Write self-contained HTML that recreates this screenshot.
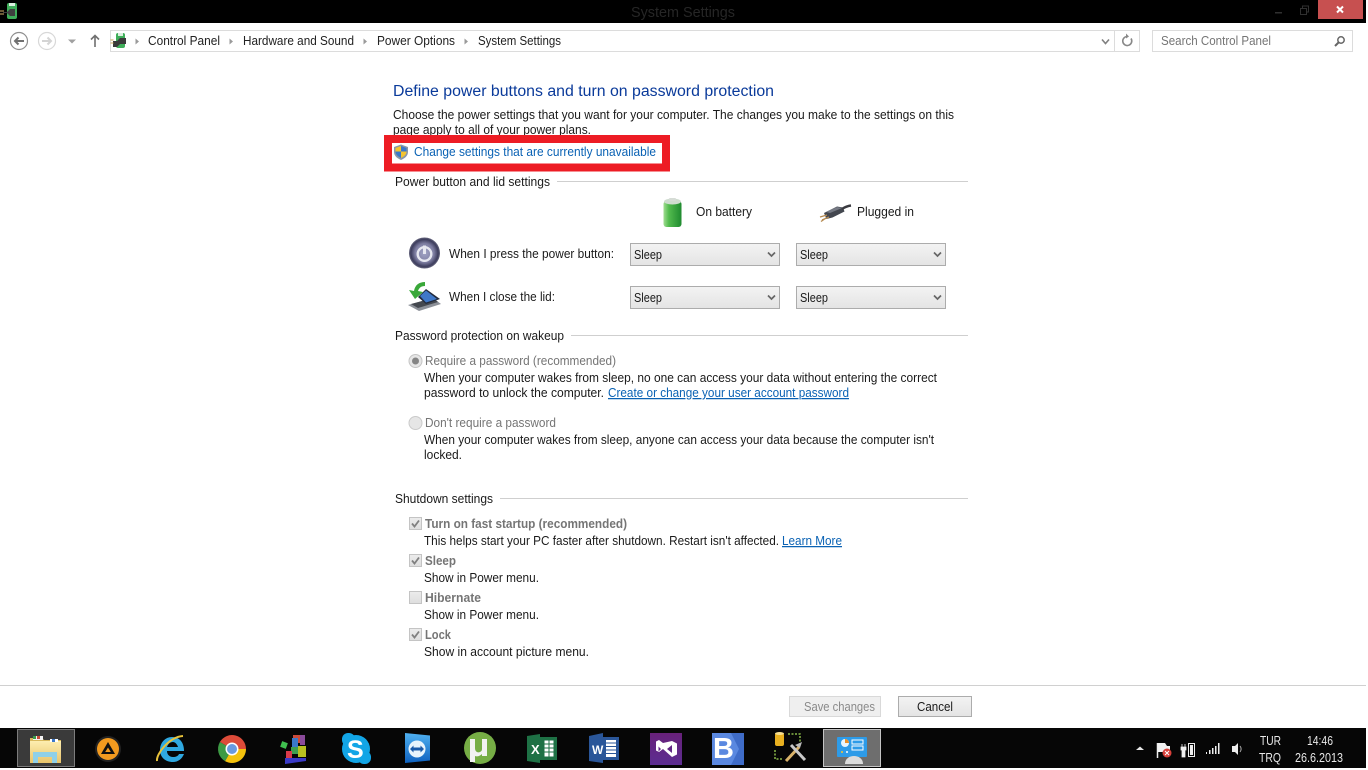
<!DOCTYPE html>
<html><head><meta charset="utf-8"><title>System Settings</title>
<style>
html,body{margin:0;padding:0;background:#fff;width:1368px;height:770px;overflow:hidden}
svg{display:block}
text{font-family:"Liberation Sans",sans-serif;font-size:12.5px;fill:#1a1a1a}
.g{fill:#757575}
.b{font-weight:bold;fill:#757575}
.l{fill:#0a62b4}
.u{fill:#0a62b4;text-decoration:underline}
.s{fill:#222}
.t{fill:#e8e8e8;font-size:13px}
</style></head><body>
<svg width="1368" height="770" viewBox="0 0 1368 770" xmlns="http://www.w3.org/2000/svg">
<defs>
<linearGradient id="sel" x1="0" y1="0" x2="0" y2="1"><stop offset="0" stop-color="#f3f3f3"/><stop offset="1" stop-color="#e4e4e4"/></linearGradient>
<linearGradient id="bat" x1="0" y1="0" x2="1" y2="0"><stop offset="0" stop-color="#a0dc90"/><stop offset=".3" stop-color="#52bb4e"/><stop offset="1" stop-color="#1f8a2f"/></linearGradient>
<radialGradient id="pw" cx=".5" cy=".5" r=".55"><stop offset="0" stop-color="#a2a4c6"/><stop offset=".55" stop-color="#7e7ea2"/><stop offset=".8" stop-color="#3c3c5c"/><stop offset="1" stop-color="#8a8a9a"/></radialGradient>
<linearGradient id="fold" x1="0" y1="0" x2="0" y2="1"><stop offset="0" stop-color="#fdeeb0"/><stop offset="1" stop-color="#e9c46a"/></linearGradient>
<linearGradient id="chk" x1="0" y1="0" x2="0" y2="1"><stop offset="0" stop-color="#ececec"/><stop offset="1" stop-color="#dedede"/></linearGradient>
<linearGradient id="vs" x1="0" y1="0" x2="0" y2="1"><stop offset="0" stop-color="#68217a"/><stop offset="1" stop-color="#5c2d91"/></linearGradient>
<linearGradient id="tv" x1="0" y1="0" x2="0" y2="1"><stop offset="0" stop-color="#4fb0f0"/><stop offset="1" stop-color="#0f62c0"/></linearGradient>
</defs>

<!-- title bar -->
<rect x="0" y="0" width="1366" height="23" fill="#000"/>
<rect x="7" y="3" width="10" height="16" rx="2" fill="#3fae5a"/><rect x="9" y="3" width="6" height="3" fill="#dcefe0"/>
<path d="M3 12h4l3-3h5v7h-5l-3-3H3z" fill="#3f3f3f"/><path d="M0 11h4M0 14h4" stroke="#d9b26a"/>
<text x="631" y="17" textLength="104" lengthAdjust="spacingAndGlyphs" style="font-size:15px;fill:#262626">System Settings</text>
<rect x="1275" y="12" width="7" height="1.500" fill="#303030"/>
<path d="M1300.500 8.500h6v6h-6zM1302.500 8.500v-2.500h6v6h-2" fill="none" stroke="#303030"/>
<rect x="1318" y="0" width="45" height="19" fill="#c75050"/>
<path d="M1337 6.500l6 6M1343 6.500l-6 6" stroke="#fff" stroke-width="2"/>

<!-- nav -->
<circle cx="19" cy="41" r="8.500" fill="#fff" stroke="#8f8f8f" stroke-width="1.200"/>
<path d="M24 41h-9M18.500 37.500L15 41l3.500 3.500" fill="none" stroke="#707070" stroke-width="2"/>
<circle cx="47" cy="41" r="8.500" fill="#fff" stroke="#d8d8d8" stroke-width="1.200"/>
<path d="M42 41h9M47.500 37.500L51 41l-3.500 3.500" fill="none" stroke="#d4d4d4" stroke-width="2"/>
<path d="M68 39.500h8l-4 4z" fill="#a0a0a0"/>
<path d="M95 47V36M91 39.500l4-4 4 4" fill="none" stroke="#707070" stroke-width="1.600"/>
<rect x="110.500" y="30.500" width="1029" height="21" fill="#fff" stroke="#dcdcdc"/>
<line x1="1114.500" y1="31" x2="1114.500" y2="51" stroke="#dcdcdc"/>
<path d="M1102 39.500l3.500 4 3.500-4" fill="none" stroke="#808080" stroke-width="1.600"/>
<path d="M1131 38.500a4.500 4.500 0 1 1-3.500-2" fill="none" stroke="#888" stroke-width="1.600"/><path d="M1126 33.500l3 3-3 2z" fill="#888"/>
<rect x="116" y="33" width="9" height="15" rx="2" fill="#3fae5a"/><rect x="118" y="33" width="5" height="3" fill="#dcefe0"/>
<path d="M113 41h4l3-3h6v6h-6l-3 3h-4z" fill="#3a3a3a"/><path d="M110.500 40h3M110.500 43h3" stroke="#c8a050"/>
<path d="M135.500 38.500l3.500 3-3.500 3z" fill="#9a9a9a"/>
<path d="M229.500 38.500l3.500 3-3.500 3z" fill="#9a9a9a"/>
<path d="M363.500 38.500l3.500 3-3.500 3z" fill="#9a9a9a"/>
<path d="M464.500 38.500l3.500 3-3.500 3z" fill="#9a9a9a"/>
<text x="148" y="45" textLength="72" lengthAdjust="spacingAndGlyphs" class="s">Control Panel</text>
<text x="243" y="45" textLength="111" lengthAdjust="spacingAndGlyphs" class="s">Hardware and Sound</text>
<text x="377" y="45" textLength="78" lengthAdjust="spacingAndGlyphs" class="s">Power Options</text>
<text x="478" y="45" textLength="83" lengthAdjust="spacingAndGlyphs" class="s">System Settings</text>
<rect x="1152.500" y="30.500" width="200" height="21" fill="#fff" stroke="#dcdcdc"/>
<text x="1161" y="45" textLength="110" lengthAdjust="spacingAndGlyphs" class="g">Search Control Panel</text>
<circle cx="1341" cy="40" r="3.200" fill="none" stroke="#666" stroke-width="1.500"/><path d="M1338.500 42.500l-3.500 3.500" stroke="#666" stroke-width="2"/>

<!-- heading -->
<text x="393" y="96" textLength="381" lengthAdjust="spacingAndGlyphs" style="font-size:15.500px;fill:#0a3a9a">Define power buttons and turn on password protection</text>
<text x="393" y="119" textLength="561" lengthAdjust="spacingAndGlyphs">Choose the power settings that you want for your computer. The changes you make to the settings on this</text>
<text x="393" y="134" textLength="198" lengthAdjust="spacingAndGlyphs">page apply to all of your power plans.</text>

<!-- red box -->
<rect x="388" y="139" width="278" height="28.500" fill="none" stroke="#ed1c24" stroke-width="8"/>
<path d="M401 144.500l7 2.500v5c0 4-3.500 6.500-7 8-3.500-1.500-7-4-7-8v-5z" fill="#8a96a8"/>
<path d="M401 146l5.500 2v3.500H401z" fill="#3b78c9"/><path d="M401 146l-5.500 2v3.500H401z" fill="#f4c430"/>
<path d="M401 151.500h5.500c0 3-2.500 5-5.500 6.500z" fill="#f4c430"/><path d="M401 151.500h-5.500c0 3 2.500 5 5.500 6.500z" fill="#3b78c9"/>
<text x="414" y="156" textLength="242" lengthAdjust="spacingAndGlyphs" class="l">Change settings that are currently unavailable</text>

<!-- power section -->
<text x="395" y="186" textLength="155" lengthAdjust="spacingAndGlyphs">Power button and lid settings</text>
<line x1="557" y1="181.500" x2="968" y2="181.500" stroke="#cfcfcf"/>

<rect x="663.500" y="201" width="18" height="26" rx="3" fill="url(#bat)"/>
<ellipse cx="672.500" cy="201.500" rx="8.500" ry="3" fill="#cfdccf"/><rect x="669" y="198" width="7" height="3" rx="1" fill="#d6dcd6"/>
<text x="696" y="216" textLength="56" lengthAdjust="spacingAndGlyphs">On battery</text>

<path d="M824 213l13-6.500 6 1 1.500 4-12 6-6 1.500z" fill="#43474f"/>
<path d="M826 212l11-5 5 1-12 5z" fill="#767a84"/>
<path d="M842 209c3-2 5-3 9-3.500" fill="none" stroke="#3a3a40" stroke-width="2.500"/>
<path d="M827 215l-7 2M829 217l-7 3M826 218l-5 3.500" stroke="#b58a50" stroke-width="1.300"/>
<text x="857" y="216" textLength="57" lengthAdjust="spacingAndGlyphs">Plugged in</text>

<circle cx="424.500" cy="253" r="15.500" fill="url(#pw)"/>
<circle cx="424.500" cy="254" r="6.800" fill="none" stroke="#e6e7f0" stroke-width="2.400"/>
<line x1="424.500" y1="245.500" x2="424.500" y2="254" stroke="#e6e7f0" stroke-width="3"/>
<text x="449" y="258" textLength="165" lengthAdjust="spacingAndGlyphs">When I press the power button:</text>

<path d="M408 305l25-7 8 6-22 7z" fill="#8c9098"/><path d="M411 304l22-6 5 4-20 6z" fill="#44484f"/>
<path d="M418 297l8-8 14 10-14 5z" fill="#222a3c"/><path d="M420 296l6-5.500 11 8.500-11 3.500z" fill="#3f78c8"/>
<path d="M425 282c-6 0-10 3-11 9l-5-1 6 9 8-7-5-1c1-3 3-5 7-5z" fill="#3aa83a"/>
<text x="449" y="301" textLength="106" lengthAdjust="spacingAndGlyphs">When I close the lid:</text>

<rect x="630.500" y="243.500" width="149" height="22" fill="url(#sel)" stroke="#acacac"/>
<text x="634" y="259" textLength="28" lengthAdjust="spacingAndGlyphs">Sleep</text>
<path d="M768 252.500l3.500 3.500 3.500-3.500" fill="none" stroke="#666" stroke-width="1.700"/>
<rect x="796.500" y="243.500" width="149" height="22" fill="url(#sel)" stroke="#acacac"/>
<text x="800" y="259" textLength="28" lengthAdjust="spacingAndGlyphs">Sleep</text>
<path d="M934 252.500l3.500 3.500 3.500-3.500" fill="none" stroke="#666" stroke-width="1.700"/>
<rect x="630.500" y="286.500" width="149" height="22" fill="url(#sel)" stroke="#acacac"/>
<text x="634" y="302" textLength="28" lengthAdjust="spacingAndGlyphs">Sleep</text>
<path d="M768 295.500l3.500 3.500 3.500-3.500" fill="none" stroke="#666" stroke-width="1.700"/>
<rect x="796.500" y="286.500" width="149" height="22" fill="url(#sel)" stroke="#acacac"/>
<text x="800" y="302" textLength="28" lengthAdjust="spacingAndGlyphs">Sleep</text>
<path d="M934 295.500l3.500 3.500 3.500-3.500" fill="none" stroke="#666" stroke-width="1.700"/>

<!-- password -->
<text x="395" y="340" textLength="169" lengthAdjust="spacingAndGlyphs">Password protection on wakeup</text>
<line x1="571" y1="335.500" x2="968" y2="335.500" stroke="#cfcfcf"/>
<circle cx="415.500" cy="361" r="6.500" fill="#e6e6e6" stroke="#c4c4c4"/><circle cx="415.500" cy="361" r="3.500" fill="#858585"/>
<text x="425" y="365" textLength="191" lengthAdjust="spacingAndGlyphs" class="g">Require a password (recommended)</text>
<text x="424" y="382" textLength="513" lengthAdjust="spacingAndGlyphs">When your computer wakes from sleep, no one can access your data without entering the correct</text>
<text x="424" y="397" textLength="180" lengthAdjust="spacingAndGlyphs">password to unlock the computer.</text>
<text x="608" y="397" textLength="241" lengthAdjust="spacingAndGlyphs" class="u">Create or change your user account password</text>
<circle cx="415.500" cy="423" r="6.500" fill="#e6e6e6" stroke="#cacaca"/>
<text x="425" y="427" textLength="131" lengthAdjust="spacingAndGlyphs" class="g">Don't require a password</text>
<text x="424" y="444" textLength="510" lengthAdjust="spacingAndGlyphs">When your computer wakes from sleep, anyone can access your data because the computer isn't</text>
<text x="424" y="459" textLength="38" lengthAdjust="spacingAndGlyphs">locked.</text>

<!-- shutdown -->
<text x="395" y="503" textLength="98" lengthAdjust="spacingAndGlyphs">Shutdown settings</text>
<line x1="500" y1="498.500" x2="968" y2="498.500" stroke="#cfcfcf"/>

<rect x="409.500" y="517.500" width="12" height="12" fill="url(#chk)" stroke="#c4c4c4"/>
<path d="M412 523.500l2.500 3 4.500-6" fill="none" stroke="#808080" stroke-width="1.800"/>
<text x="425" y="528" textLength="202" lengthAdjust="spacingAndGlyphs" class="b">Turn on fast startup (recommended)</text>
<text x="424" y="545" textLength="355" lengthAdjust="spacingAndGlyphs">This helps start your PC faster after shutdown. Restart isn't affected.</text>
<text x="782" y="545" textLength="60" lengthAdjust="spacingAndGlyphs" class="u">Learn More</text>

<rect x="409.500" y="554.500" width="12" height="12" fill="url(#chk)" stroke="#c4c4c4"/>
<path d="M412 560.500l2.500 3 4.500-6" fill="none" stroke="#808080" stroke-width="1.800"/>
<text x="425" y="565" textLength="31" lengthAdjust="spacingAndGlyphs" class="b">Sleep</text>
<text x="424" y="582" textLength="115" lengthAdjust="spacingAndGlyphs">Show in Power menu.</text>

<rect x="409.500" y="591.500" width="12" height="12" fill="url(#chk)" stroke="#c4c4c4"/>
<text x="425" y="602" textLength="56" lengthAdjust="spacingAndGlyphs" class="b">Hibernate</text>
<text x="424" y="619" textLength="115" lengthAdjust="spacingAndGlyphs">Show in Power menu.</text>

<rect x="409.500" y="628.500" width="12" height="12" fill="url(#chk)" stroke="#c4c4c4"/>
<path d="M412 634.500l2.500 3 4.500-6" fill="none" stroke="#808080" stroke-width="1.800"/>
<text x="425" y="639" textLength="26" lengthAdjust="spacingAndGlyphs" class="b">Lock</text>
<text x="424" y="656" textLength="165" lengthAdjust="spacingAndGlyphs">Show in account picture menu.</text>

<!-- footer -->
<line x1="0" y1="685.500" x2="1366" y2="685.500" stroke="#d0d0d0"/>
<rect x="789.500" y="696.500" width="91" height="20" fill="#efefef" stroke="#d9d9d9"/>
<text x="804" y="711" textLength="71" lengthAdjust="spacingAndGlyphs" style="fill:#8a8a8a">Save changes</text>
<rect x="898.500" y="696.500" width="73" height="20" fill="url(#sel)" stroke="#acacac"/>
<text x="917" y="711" textLength="36" lengthAdjust="spacingAndGlyphs">Cancel</text>

<!-- taskbar -->
<rect x="0" y="728" width="1366" height="40" fill="#060606"/>
<rect x="17.500" y="729.500" width="57" height="37" fill="#3a3a3a" stroke="#7c7c7c"/>
<rect x="823.500" y="729.500" width="57" height="37" fill="#6e6e6e" stroke="#c4c4c4"/>

<!-- explorer -->
<path d="M30 738h12l2 2h17v23H30z" fill="#d9b95c"/>
<rect x="30" y="741" width="31" height="22" fill="url(#fold)"/>
<rect x="33" y="736" width="10" height="4" fill="#f4f4f4"/><rect x="33" y="736" width="3" height="3" fill="#3a9a4a"/><rect x="37" y="736" width="3" height="3" fill="#c94a3a"/>
<rect x="50" y="739" width="8" height="3" fill="#fff"/><rect x="52" y="739" width="3" height="3" fill="#3b78c9"/>
<path d="M33 763v-11h24v11h-5v-6H38v6z" fill="#8fd0e8"/>

<!-- aimp -->
<circle cx="108" cy="749" r="13" fill="#222"/><circle cx="108" cy="749" r="11" fill="#f29a1f"/>
<path d="M108 742l7 12h-14z" fill="#111"/><path d="M108 747.500l2.800 4.500h-5.600z" fill="#f29a1f"/>

<!-- IE -->
<path d="M160 750c0-7 5-13 12-13 8 0 12 6 12 14h-17c0 3 2 6 6 6 3 0 5-1 6-3h5c-2 5-6 8-11 8-8 0-13-5-13-12z" fill="#2fa8e0"/>
<path d="M167 747h11c-1-3-3-5-5-5-3 0-5 2-6 5z" fill="#060606"/>
<path d="M157 761c-1-7 12-24 26-25" fill="none" stroke="#e8c23a" stroke-width="2"/>

<!-- chrome -->
<path d="M232 749L219.900 742A14 14 0 0 1 246 749z" fill="#dd4b39"/>
<path d="M232 749H246A14 14 0 0 1 225 761.100z" fill="#f4c20d"/>
<path d="M232 749L225 761.100A14 14 0 0 1 219.900 742z" fill="#3d9a44"/>
<circle cx="232" cy="749" r="6.500" fill="#fff"/><circle cx="232" cy="749" r="5" fill="#6a9ae0"/>

<!-- defrag cubes -->
<rect x="281" y="742" width="6" height="6" fill="#3fbf4f" transform="rotate(20 284 745)"/>
<rect x="293" y="735" width="7" height="8" fill="#c94a3a"/><rect x="292" y="738" width="6" height="9" fill="#3b78c9"/><rect x="300" y="735" width="5" height="10" fill="#8a4a9a"/>
<rect x="298" y="746" width="8" height="11" fill="#b8c020"/><rect x="291" y="747" width="7" height="7" fill="#3f9f4f"/>
<rect x="286" y="751" width="6" height="7" fill="#d93a4a"/><path d="M285 758h21v3l-21 3z" fill="#3a3ac8"/>

<!-- skype -->
<circle cx="356" cy="749" r="14" fill="#12a5e6"/><rect x="342" y="733" width="13" height="13" rx="6" fill="#12a5e6"/><rect x="358" y="751" width="13" height="13" rx="6" fill="#12a5e6"/>
<text x="347" y="758" style="font-size:25px;font-weight:bold;fill:#fff">S</text>

<!-- teamviewer -->
<path d="M405 733l25 2.500v25l-25 2.500z" fill="url(#tv)"/>
<circle cx="417" cy="749" r="8.500" fill="#e8f4fc"/>
<path d="M410 749l3.500-3.500v2h7v-2l3.500 3.500-3.500 3.500v-2h-7v2z" fill="#1a5aa8"/>

<!-- utorrent -->
<circle cx="480" cy="748" r="16" fill="#76ad45"/>
<path d="M470 739h5v9c0 4 3 5 5 4 2-1 2-2 2-4v-9h5v17h-5v-2c-2 2-5 3-7 2v6h-5z" fill="#f2f2f2"/>

<!-- excel -->
<path d="M527 736l13-2v29l-13-2z" fill="#1e7145"/>
<rect x="540" y="737" width="17" height="23" fill="#1e7145"/>
<path d="M544 740h10v17h-10zM544 744h10M544 748h10M544 752h10M549 740v17" fill="#fff" stroke="#1e7145"/>
<text x="531" y="754" style="font-size:13px;font-weight:bold;fill:#fff">X</text>

<!-- word -->
<path d="M589 736l14-3v30l-14-2z" fill="#2a5699"/>
<rect x="603" y="737" width="16" height="23" fill="#2a5699"/>
<path d="M606 740h10v17h-10z" fill="#fff"/><path d="M606 743h10M606 746.500h10M606 750h10M606 753.500h10" stroke="#2a5699"/>
<text x="592" y="754" style="font-size:12px;font-weight:bold;fill:#fff">W</text>

<!-- VS -->
<rect x="650" y="733" width="32" height="32" fill="url(#vs)"/>
<path d="M672 741l5 2.500v11l-5 2.500-9-8-4 3-3-1.500v-9l3-1.500 4 3zM672 745l-5 4 5 4zM658.500 746.500v5l2.500-2.500z" fill="#fff" fill-rule="evenodd"/>

<!-- blend -->
<rect x="712" y="733" width="32" height="32" fill="#5a88e0"/>
<path d="M731 733h13v32h-13l8-16z" fill="#3f6cc8"/>
<text x="713" y="758" style="font-size:29px;font-weight:bold;fill:#fff">B</text>

<!-- sql tool -->
<rect x="775" y="733" width="9" height="13" rx="2" fill="#e8b020"/>
<ellipse cx="779.500" cy="733.500" rx="4.500" ry="1.500" fill="#f8e090"/>
<path d="M788 734h12v10M775 750v9h8" fill="none" stroke="#8ab84a" stroke-width="1.500" stroke-dasharray="2 1.500"/>
<path d="M786 761l13-14" stroke="#d9b26a" stroke-width="3"/>
<path d="M791 745l14 15" stroke="#c8c8c8" stroke-width="3"/>
<path d="M795 745l7-3-2 6z" fill="#bbb"/>

<!-- control panel -->
<rect x="837" y="737" width="30" height="20" rx="1" fill="#2d9be8"/>
<circle cx="845" cy="743" r="4" fill="#e8f4fc"/><path d="M845 743v-4a4 4 0 0 1 4 4z" fill="#e8902a"/>
<rect x="852" y="740" width="11" height="4" fill="none" stroke="#fff"/><rect x="852" y="746" width="11" height="4" fill="none" stroke="#fff"/>
<circle cx="842" cy="752" r="1" fill="#f4c430"/><circle cx="847" cy="752" r="1" fill="#fff"/>
<path d="M845 764c0-5 4-8 9-8s9 3 9 8z" fill="#dcdcdc"/>

<!-- tray -->
<path d="M1136 750l4-3.500 4 3.500z" fill="#e8e8e8"/>
<path d="M1157.500 743v15" stroke="#eee" stroke-width="1.500"/><path d="M1158 743h7l2 3h3v6h-12z" fill="#f2f2f2"/>
<circle cx="1167" cy="753" r="4.500" fill="#d8403a"/><path d="M1165 751l4 4M1169 751l-4 4" stroke="#fff"/>
<path d="M1182 744v3M1185 744v3M1181 747h5v3h-1v7h-3v-7h-1z" fill="#eee" stroke="#eee" stroke-width=".8"/>
<rect x="1188.500" y="743.500" width="6" height="13" fill="none" stroke="#eee"/><rect x="1190" y="745" width="3" height="10" fill="#eee"/>
<path d="M1206 752h1v2h-1zM1209 750h1.500v4H1209zM1212 748h1.500v6H1212zM1215 746h1.500v8H1215zM1218 743h1.500v11H1218z" fill="#eee"/>
<path d="M1232 746h3l3-3v12l-3-3h-3z" fill="#eee"/><path d="M1240 746c1.500 2 1.500 4 0 6" fill="none" stroke="#aaa"/>
<text x="1260" y="745" textLength="21" lengthAdjust="spacingAndGlyphs" class="t">TUR</text>
<text x="1259" y="762" textLength="22" lengthAdjust="spacingAndGlyphs" class="t">TRQ</text>
<text x="1307" y="745" textLength="26" lengthAdjust="spacingAndGlyphs" class="t">14:46</text>
<text x="1295" y="762" textLength="48" lengthAdjust="spacingAndGlyphs" class="t">26.6.2013</text>
</svg>
</body></html>
